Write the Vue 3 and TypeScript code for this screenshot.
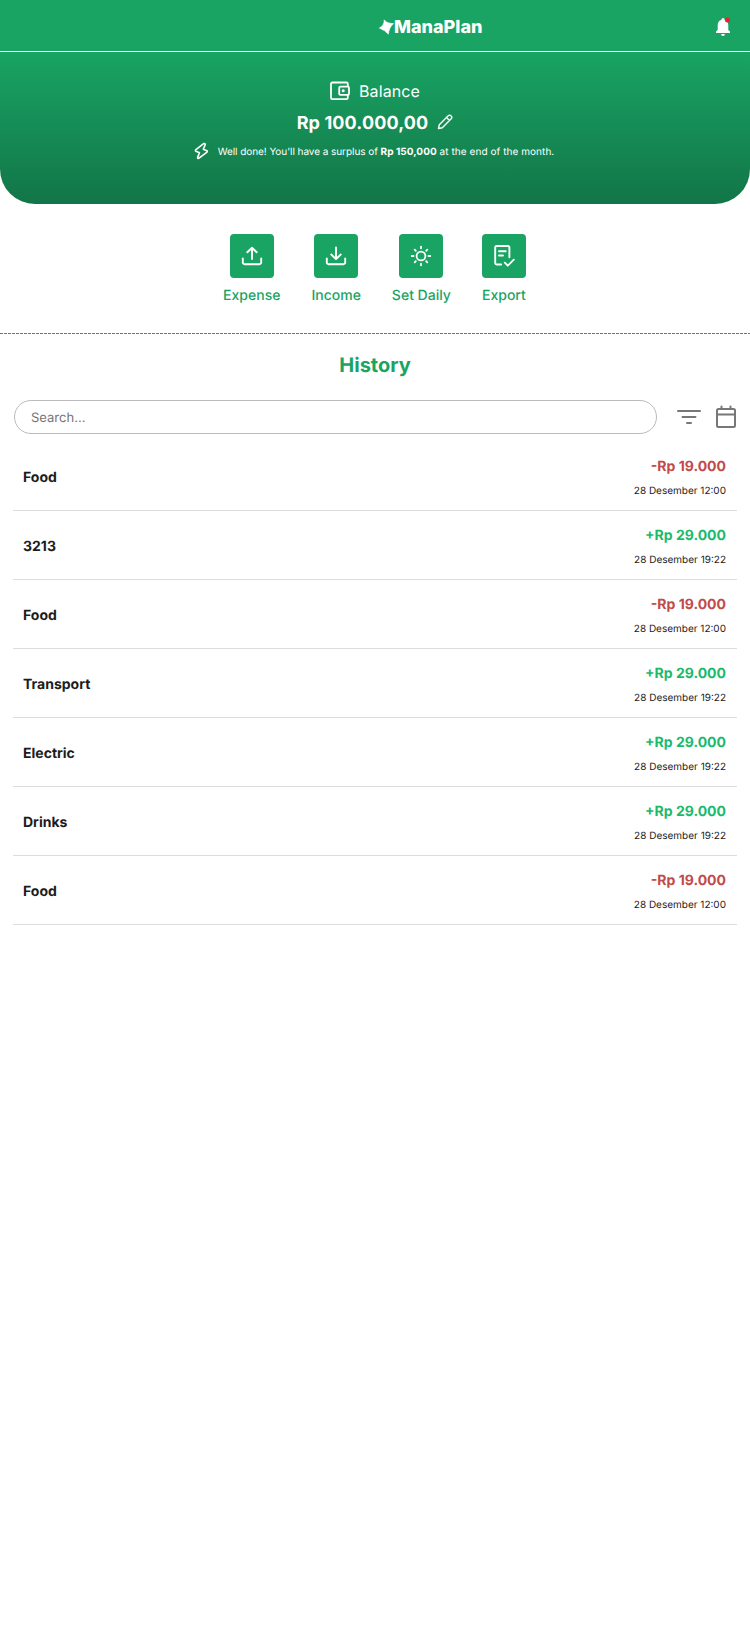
<script setup lang="ts">
interface Action {
  label: string
  icon: 'expense' | 'income' | 'daily' | 'export'
}

interface Transaction {
  id: number
  title: string
  amount: string
  date: string
  income: boolean
}

const actions: Action[] = [
  { label: 'Expense', icon: 'expense' },
  { label: 'Income', icon: 'income' },
  { label: 'Set Daily', icon: 'daily' },
  { label: 'Export', icon: 'export' },
]

const titles: [string, boolean][] = [
  ['Food', false],
  ['3213', true],
  ['Food', false],
  ['Transport', true],
  ['Electric', true],
  ['Drinks', true],
  ['Food', false],
]

const transactions: Transaction[] = titles.map(([title, income], id) => ({
  id,
  title,
  income,
  amount: income ? '+Rp 29.000' : '-Rp 19.000',
  date: income ? '28 Desember 19:22' : '28 Desember 12:00',
}))
</script>

<template>
  <div class="page">
    <header class="topbar">
      <div class="brand">
        <svg class="star" width="15" height="16" viewBox="0 0 15 16" fill="#fff">
          <path d="M5.200 .8Q7.500 4.500 14.600 4.600Q9.800 8.800 9.400 15.200Q6.200 11.400 .3 9Q5.400 6.600 5.200 .8Z" stroke="#fff" stroke-width=".6" stroke-linejoin="round" />
        </svg>
        <span>ManaPlan</span>
      </div>
      <button class="bell" aria-label="Notifications">
        <svg width="16" height="20" viewBox="0 0 16 20">
          <path fill="#fff" d="M1 16v-1.500l1.700-1.500V8.500C2.700 5.500 4 3.300 6.500 2.700V2.500a1.500 1.500 0 0 1 3 0v.2c2.500.6 3.800 2.800 3.800 5.800V13l1.700 1.500V16ZM6.100 17h3.800a1.900 1.900 0 0 1-3.800 0Z" />
          <circle cx="12.500" cy="3" r="2.500" fill="#e8232b" />
        </svg>
      </button>
    </header>

    <section class="hero">
      <div class="balance">
        <svg width="20" height="20" viewBox="0 0 20 20" fill="none" stroke="#fff" stroke-width="1.800" stroke-linejoin="round">
          <path d="M17.800 5.700V2.800a1.300 1.300 0 0 0-1.300-1.300H2.300A1.300 1.300 0 0 0 1 2.800v14a1.300 1.300 0 0 0 1.300 1.300h14.200a1.300 1.300 0 0 0 1.300-1.300v-2.900" />
          <rect x="9.200" y="5.700" width="9.800" height="8.200" rx="1.200" />
          <circle cx="13.200" cy="9.800" r="1.500" fill="#fff" stroke="none" />
        </svg>
        <span>Balance</span>
      </div>
      <div class="total">
        <strong>Rp 100.000,00</strong>
        <svg width="16" height="16" viewBox="0 0 16 16" fill="none" stroke="#fff" stroke-width="1.400" stroke-linejoin="round">
          <path d="M1.500 14.500l.8-3.800 8.900-8.900a1.900 1.900 0 0 1 2.800 0l.2.200a1.900 1.900 0 0 1 0 2.800l-8.900 8.900ZM9.500 3.500l3 3" />
        </svg>
      </div>
      <div class="message">
        <svg width="16" height="18" viewBox="0 0 16 18" fill="none" stroke="#fff" stroke-width="1.600" stroke-linejoin="round">
          <path d="M9.600 1.600L1.600 7.800Q1.100 8.700 1.900 9.200L5.500 10.700L3.600 15.400Q3.600 16.700 4.700 16.300L13 10.100Q13.700 9.200 12.900 8.700L9.300 7.200L11.300 2.500Q11.200 1.200 9.600 1.600Z" />
        </svg>
        <p><span class="lead">Well done! You'll have a surplus of </span><b>Rp 150,000</b><span class="tail"> at the end of the month.</span></p>
      </div>
    </section>

    <nav class="actions">
      <a v-for="action in actions" :key="action.icon" class="action">
        <span class="tile">
          <svg width="24" height="24" viewBox="0 0 24 24" fill="none" stroke="#fff" stroke-width="1.900" stroke-linecap="round" stroke-linejoin="round">
            <template v-if="action.icon === 'expense'">
              <path d="M2.800 14.500v4a1.700 1.700 0 0 0 1.700 1.700h15a1.700 1.700 0 0 0 1.700-1.700v-4M12 15V4M7.300 8.300L12 3.700l4.700 4.600" />
            </template>
            <template v-else-if="action.icon === 'income'">
              <path d="M2.800 14.500v4a1.700 1.700 0 0 0 1.700 1.700h15a1.700 1.700 0 0 0 1.700-1.700v-4M12 3.500V15M7.300 10.500L12 15.200l4.700-4.700" />
            </template>
            <template v-else-if="action.icon === 'daily'">
              <g stroke-width="1.800">
                <circle cx="12" cy="12" r="4.400" />
                <path d="M12 2.700v1.600M12 19.700v1.600M2.700 12h1.800M19.500 12h1.800M5.700 5.700l1.100 1.100M17.200 17.200l1.100 1.100M5.700 18.300l1.100-1.100M17.200 6.800l1.100-1.100" />
              </g>
            </template>
            <template v-else>
              <g stroke-width="1.900">
                <path d="M9.200 20.500H4.700a1.500 1.500 0 0 1-1.500-1.500V3.500A1.500 1.500 0 0 1 4.700 2h11.200a1.500 1.500 0 0 1 1.500 1.500v9.800M7 7.300h6.700M7 11.500h4M12.800 18.700l3 3 6-6" />
              </g>
            </template>
          </svg>
        </span>
        <span class="label">{{ action.label }}</span>
      </a>
    </nav>

    <div class="divider"></div>

    <main class="history">
      <h1>History</h1>
      <div class="tools">
        <input type="text" placeholder="Search..." />
        <svg class="filter" width="24" height="16" viewBox="0 0 24 16" stroke="#777" stroke-width="2" stroke-linecap="round">
          <path d="M1 2h22M5.500 8h13M10 14h4" />
        </svg>
        <svg class="calendar" width="20" height="24" viewBox="0 0 20 24" fill="none" stroke="#777" stroke-width="2" stroke-linecap="round">
          <rect x="1" y="4" width="18" height="18" rx="1.500" />
          <path d="M1 9.500h18M5.500 1.500v2M14.500 1.500v2" />
        </svg>
      </div>
      <ul>
        <li v-for="item in transactions" :key="item.id">
          <span class="title">{{ item.title }}</span>
          <div class="detail">
            <span class="amount" :class="{ income: item.income }">{{ item.amount }}</span>
            <time>{{ item.date }}</time>
          </div>
        </li>
      </ul>
    </main>
  </div>
</template>

<style>
body {
  background: #fff;
}
</style>

<style scoped>
.page {
  width: 750px;
  min-height: 1626px;
  font-family: Inter, "Liberation Sans", sans-serif;
  text-rendering: geometricPrecision;
  color: #1c1c1c;
}
.page * {
  box-sizing: border-box;
}
svg {
  display: block;
  flex-shrink: 0;
}
.topbar {
  display: flex;
  justify-content: space-between;
  align-items: center;
  height: 52px;
  padding: 0 19px 0 379px;
  background: #19a463;
  border-bottom: 1px solid #fff;
}
.brand {
  display: flex;
  align-items: center;
  color: #fff;
  font-size: 18px;
  font-weight: 800;
  line-height: 24px;
  padding-top: 2px;
}
.brand span {
  padding-top: 2px;
}
.bell {
  padding: 2px 0 0;
  border: 0;
  background: none;
}
.hero {
  display: flex;
  flex-direction: column;
  align-items: center;
  height: 152px;
  padding-top: 27px;
  color: #fff;
  background: linear-gradient(#19a463, #127548);
  border-radius: 0 0 35px 35px;
}
.balance {
  display: flex;
  align-items: center;
  gap: 9px;
  height: 24px;
  font-size: 16px;
  letter-spacing: 0.1px;
}
.total {
  display: flex;
  align-items: center;
  gap: 9px;
  height: 24px;
  margin-top: 7px;
  font-size: 18px;
  letter-spacing: 0.12px;
}
.total strong {
  font-weight: 700;
  padding-top: 2px;
}
.message {
  display: flex;
  align-items: center;
  gap: 8px;
  height: 20px;
  margin-top: 7px;
  padding-right: 2px;
  font-size: 10px;
}
.message p {
  margin: 0;
  padding-top: 2px;
  font-weight: 400;
}
.message b {
  font-weight: 700;
  letter-spacing: 0.05px;
}
.lead {
  letter-spacing: -0.06px;
}
.tail {
  letter-spacing: 0.06px;
}
.actions {
  display: flex;
  justify-content: center;
  gap: 31px;
  height: 129px;
  padding: 30px 1px 0 0;
}
.action {
  display: flex;
  flex-direction: column;
  align-items: center;
  color: #19a463;
}
.tile {
  display: flex;
  align-items: center;
  justify-content: center;
  width: 44px;
  height: 44px;
  border-radius: 4px;
  background: #19a463;
}
.label {
  margin-top: 9px;
  font-size: 14px;
  font-weight: 450;
  line-height: 18px;
}
.divider {
  height: 1px;
  background: repeating-linear-gradient(90deg, #19a463 0 2.600px, #fff 2.600px 4px);
}
.history {
  padding: 0 13px;
}
h1 {
  margin: 0;
  padding-top: 19px;
  font-size: 20px;
  line-height: 24px;
  font-weight: 700;
  text-align: center;
  color: #19a463;
}
.tools {
  display: flex;
  align-items: center;
  height: 34px;
  margin-top: 23px;
}
input {
  width: 643px;
  height: 34px;
  margin-left: 1px;
  padding: 2px 16px 0;
  border: 1px solid #bbb;
  border-radius: 17px;
  background: #fff;
  font-family: inherit;
  font-size: 13px;
  text-rendering: inherit;
  outline: none;
}
input::placeholder {
  color: #757575;
}
.filter {
  margin-left: 20px;
}
.calendar {
  margin-left: 15px;
}
ul {
  margin: 8px 0 0;
  padding: 0;
  list-style: none;
}
li {
  display: flex;
  justify-content: space-between;
  align-items: center;
  height: 69px;
  padding: 0 11px 0 10px;
  border-bottom: 1px solid #ddd;
}
.title {
  padding-top: 2px;
  font-size: 14px;
  font-weight: 700;
}
.detail {
  display: flex;
  flex-direction: column;
  align-items: flex-end;
  gap: 9px;
  padding-top: 3px;
}
.amount {
  font-size: 14px;
  line-height: 17px;
  font-weight: 700;
  color: #c14a4a;
}
.amount.income {
  color: #1aba6d;
}
time {
  font-size: 10px;
  line-height: 14px;
}
</style>
